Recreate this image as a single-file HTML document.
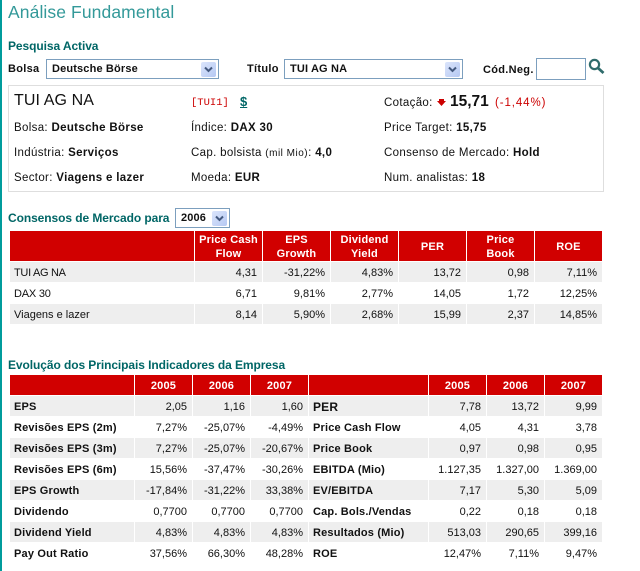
<!DOCTYPE html>
<html lang="pt">
<head>
<meta charset="utf-8">
<title>Análise Fundamental</title>
<style>
html,body{margin:0;padding:0;background:#fff;width:640px;height:571px;overflow:hidden}
body{position:relative;font-family:"Liberation Sans",Arial,sans-serif;font-size:11px;color:#111}
.a{position:absolute;white-space:nowrap;line-height:14px}
.bar{position:absolute;left:0;top:0;width:2px;height:571px;background:#009c9c}
.h{color:#006666;font-weight:bold;font-size:12px;letter-spacing:-.08px}
.lab{font-size:11.5px;letter-spacing:.33px}
.b{font-weight:bold}
.nb{font-size:11px;letter-spacing:.3px}
.sel{position:absolute;box-sizing:border-box;background:#fff;border:1px solid #7c9fbe;font-weight:bold;font-size:11px;letter-spacing:.15px;line-height:18px;padding-left:5px;color:#111}
.btn{position:absolute;right:2px;top:2px;width:15px;height:15px;background:linear-gradient(135deg,#dbe5fb,#b5c8f3);border-radius:2px}
.btn svg{position:absolute;left:3px;top:4px}
.box{position:absolute;left:8px;top:85px;width:596px;height:107px;box-sizing:border-box;border:1px solid #dedede}
table{position:absolute;left:10px;border-collapse:separate;border-spacing:0;table-layout:fixed;width:592px}
td,th{padding:2px 5px 0 4px;box-sizing:border-box;border-right:1px solid #fff;border-bottom:1px solid #fff;font-size:11px;letter-spacing:0;text-align:right;white-space:nowrap;overflow:hidden}
td:last-child,th:last-child{border-right:0}
th{background:#d10000;color:#fff;font-weight:bold;text-align:center;line-height:14px;letter-spacing:.2px;padding:2px 2px 0}
tr.g td{background:#eeeeee}
td.l{text-align:left;padding-left:4px}
td.lb{text-align:left;padding-left:4px;font-weight:bold;letter-spacing:.18px}
td.p{padding-left:4px}
#t1 tr{height:21px}
#t1 tr.hd{height:31px}
#t2 tr{height:21px}
</style>
</head>
<body>
<div class="bar"></div>

<div class="a" style="left:8px;top:2px;font-size:17.5px;line-height:21px;color:#339999;letter-spacing:.1px">Análise Fundamental</div>
<div class="a h" style="left:8px;top:39px">Pesquisa Activa</div>

<div class="a b nb" style="left:8px;top:62px">Bolsa</div>
<div class="sel" style="left:46px;top:59px;width:173px;height:20px">Deutsche Börse<div class="btn"><svg width="9" height="7" viewBox="0 0 9 7"><path d="M1 1.5L4.5 5L8 1.5" fill="none" stroke="#44597f" stroke-width="2"/></svg></div></div>

<div class="a b nb" style="left:247px;top:62px">Título</div>
<div class="sel" style="left:284px;top:59px;width:179px;height:20px">TUI AG NA<div class="btn"><svg width="9" height="7" viewBox="0 0 9 7"><path d="M1 1.5L4.5 5L8 1.5" fill="none" stroke="#44597f" stroke-width="2"/></svg></div></div>

<div class="a b nb" style="left:483px;top:63px">Cód.Neg.</div>
<div style="position:absolute;left:536px;top:58px;width:50px;height:22px;box-sizing:border-box;border:1px solid #7c9fbe;background:#fff"></div>
<svg style="position:absolute;left:588px;top:58px" width="17" height="17" viewBox="0 0 17 17"><circle cx="6.5" cy="6.5" r="4.6" fill="#fff" stroke="#2f6b6b" stroke-width="2.2"/><path d="M10 10L15.5 15" stroke="#2f6b6b" stroke-width="2.8"/></svg>

<div class="box"></div>
<div class="a" style="left:14px;top:92px;font-size:16px;line-height:18px;letter-spacing:.1px;color:#111">TUI AG NA</div>
<div class="a" style="left:191px;top:96px;font-family:'Liberation Mono',monospace;font-size:10.5px;color:#cc0000">[TUI1]</div>
<div class="a b" style="left:240px;top:95px;font-size:13px;color:#006666;text-decoration:underline">$</div>

<div class="a lab" style="left:14px;top:121px">Bolsa: <b>Deutsche Börse</b></div>
<div class="a lab" style="left:14px;top:146px">Indústria: <b>Serviços</b></div>
<div class="a lab" style="left:14px;top:171px">Sector: <b>Viagens e lazer</b></div>

<div class="a lab" style="left:191px;top:121px">Índice: <b>DAX 30</b></div>
<div class="a lab" style="left:191px;top:146px">Cap. bolsista <span style="font-size:10px;letter-spacing:.5px">(mil Mio)</span>: <b>4,0</b></div>
<div class="a lab" style="left:191px;top:171px">Moeda: <b>EUR</b></div>

<div class="a lab" style="left:384px;top:96px">Cotação:</div>
<svg style="position:absolute;left:437px;top:99px" width="9" height="7" viewBox="0 0 9 7"><path d="M2 0H7V2H9L4.5 7L0 2H2Z" fill="#cc0000"/></svg>
<div class="a b" style="left:450px;top:93px;font-size:15.5px;line-height:18px">15,71</div>
<div class="a" style="left:495px;top:96px;font-size:11.5px;letter-spacing:.9px;color:#cc0000">(-1,44%)</div>
<div class="a lab" style="left:384px;top:121px">Price Target: <b>15,75</b></div>
<div class="a lab" style="left:384px;top:146px">Consenso de Mercado: <b>Hold</b></div>
<div class="a lab" style="left:384px;top:171px">Num. analistas: <b>18</b></div>

<div class="a h" style="left:8px;top:211px">Consensos de Mercado para</div>
<div class="sel" style="left:175px;top:208px;width:55px;height:20px">2006<div class="btn"><svg width="9" height="7" viewBox="0 0 9 7"><path d="M1 1.5L4.5 5L8 1.5" fill="none" stroke="#44597f" stroke-width="2"/></svg></div></div>

<table id="t1" style="top:231px">
<colgroup><col style="width:185px"><col style="width:68px"><col style="width:68px"><col style="width:68px"><col style="width:68px"><col style="width:68px"><col style="width:67px"></colgroup>
<tr class="hd"><th></th><th>Price Cash<br>Flow</th><th>EPS<br>Growth</th><th>Dividend<br>Yield</th><th>PER</th><th>Price<br>Book</th><th>ROE</th></tr>
<tr class="g"><td class="l" style="letter-spacing:-.3px">TUI AG NA</td><td>4,31</td><td>-31,22%</td><td>4,83%</td><td>13,72</td><td>0,98</td><td>7,11%</td></tr>
<tr><td class="l" style="letter-spacing:-.2px">DAX 30</td><td>6,71</td><td>9,81%</td><td>2,77%</td><td>14,05</td><td>1,72</td><td>12,25%</td></tr>
<tr class="g"><td class="l">Viagens e lazer</td><td>8,14</td><td>5,90%</td><td>2,68%</td><td>15,99</td><td>2,37</td><td>14,85%</td></tr>
</table>

<div class="a h" style="left:8px;top:358px">Evolução dos Principais Indicadores da Empresa</div>

<table id="t2" style="top:375px">
<colgroup><col style="width:125px"><col style="width:58px"><col style="width:58px"><col style="width:58px"><col style="width:120px"><col style="width:58px"><col style="width:58px"><col style="width:57px"></colgroup>
<tr><th></th><th>2005</th><th>2006</th><th>2007</th><th></th><th>2005</th><th>2006</th><th>2007</th></tr>
<tr class="g"><td class="lb">EPS</td><td>2,05</td><td>1,16</td><td>1,60</td><td class="lb p" style="font-size:12px">PER</td><td>7,78</td><td>13,72</td><td>9,99</td></tr>
<tr><td class="lb">Revisões EPS (2m)</td><td>7,27%</td><td>-25,07%</td><td>-4,49%</td><td class="lb p">Price Cash Flow</td><td>4,05</td><td>4,31</td><td>3,78</td></tr>
<tr class="g"><td class="lb">Revisões EPS (3m)</td><td>7,27%</td><td>-25,07%</td><td>-20,67%</td><td class="lb p">Price Book</td><td>0,97</td><td>0,98</td><td>0,95</td></tr>
<tr><td class="lb">Revisões EPS (6m)</td><td>15,56%</td><td>-37,47%</td><td>-30,26%</td><td class="lb p">EBITDA (Mio)</td><td>1.127,35</td><td>1.327,00</td><td>1.369,00</td></tr>
<tr class="g"><td class="lb">EPS Growth</td><td>-17,84%</td><td>-31,22%</td><td>33,38%</td><td class="lb p">EV/EBITDA</td><td>7,17</td><td>5,30</td><td>5,09</td></tr>
<tr><td class="lb">Dividendo</td><td>0,7700</td><td>0,7700</td><td>0,7700</td><td class="lb p">Cap. Bols./Vendas</td><td>0,22</td><td>0,18</td><td>0,18</td></tr>
<tr class="g"><td class="lb">Dividend Yield</td><td>4,83%</td><td>4,83%</td><td>4,83%</td><td class="lb p">Resultados (Mio)</td><td>513,03</td><td>290,65</td><td>399,16</td></tr>
<tr><td class="lb">Pay Out Ratio</td><td>37,56%</td><td>66,30%</td><td>48,28%</td><td class="lb p">ROE</td><td>12,47%</td><td>7,11%</td><td>9,47%</td></tr>
</table>
</body>
</html>
